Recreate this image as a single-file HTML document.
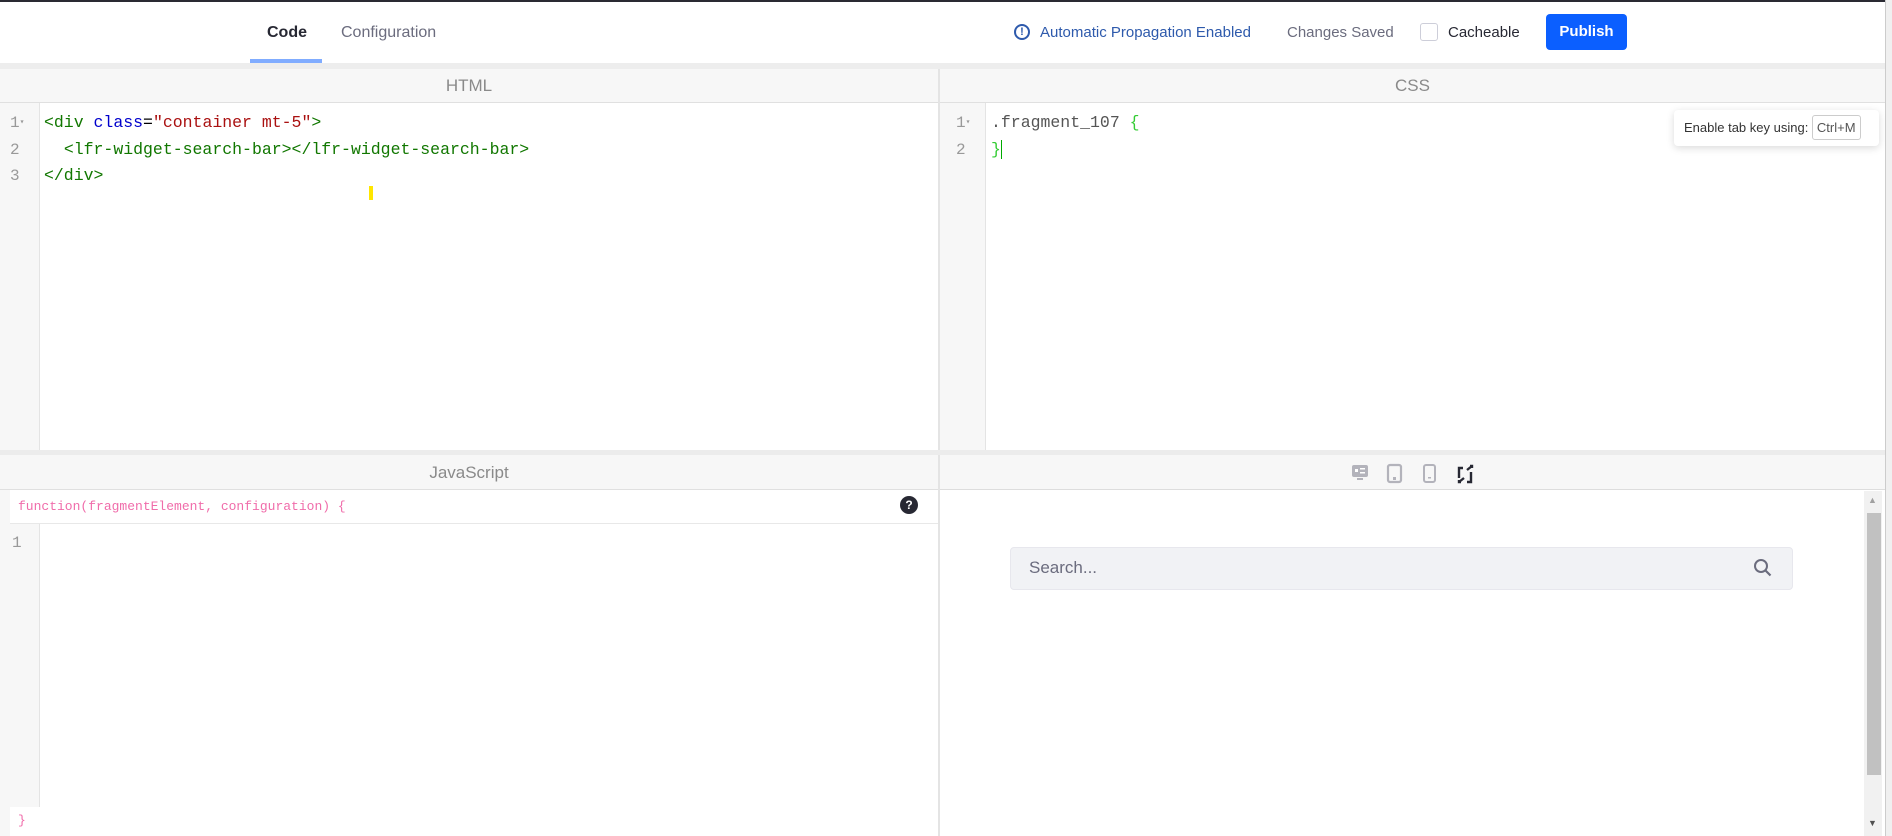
<!DOCTYPE html>
<html><head><meta charset="utf-8"><style>
*{box-sizing:border-box;margin:0;padding:0}
body{width:1892px;height:836px;overflow:hidden;background:#fff;font-family:"Liberation Sans",sans-serif;position:relative}
.a{position:absolute}
.mono{font-family:"Liberation Mono",monospace;font-size:16.5px;white-space:pre}
.hdr{background:#f7f7f7;border-bottom:1px solid #e0e0e0;color:#8a8a8a;font-size:17px;text-align:center}
.gut{background:#f7f7f7;border-right:1px solid #e4e4e4}
.ln{color:#999;font-family:"Liberation Mono",monospace;font-size:16px;line-height:26.5px;white-space:pre}
.ln i{font-style:normal;font-size:8px;vertical-align:top;line-height:26.5px}
</style></head><body>
<div class="a" style="left:0;top:0;width:1892px;height:2px;background:#2a2a33"></div>
<div class="a" style="left:267px;top:24px;font-size:16px;color:#272833;font-weight:bold">Code</div>
<div class="a" style="left:250px;top:59px;width:72px;height:4px;background:#80acff"></div>
<div class="a" style="left:341px;top:24px;font-size:16px;color:#6b6c7e">Configuration</div>
<div class="a" style="left:1014px;top:24px;width:16px;height:16px;border:2px solid #2e5aac;border-radius:50%;color:#2e5aac;font-size:11px;font-weight:bold;text-align:center;line-height:12px">!</div>
<div class="a" style="left:1040px;top:24px;font-size:15px;color:#2e5aac">Automatic Propagation Enabled</div>
<div class="a" style="left:1287px;top:24px;font-size:15px;color:#6b6c7e">Changes Saved</div>
<div class="a" style="left:1420px;top:23px;width:18px;height:18px;border:1px solid #cdced9;border-radius:3px"></div>
<div class="a" style="left:1448px;top:24px;font-size:15px;color:#272833">Cacheable</div>
<div class="a" style="left:1546px;top:14px;width:81px;height:36px;background:#0b5fff;border-radius:4px;color:#fff;font-weight:bold;font-size:15px;text-align:center;line-height:36px">Publish</div>
<div class="a" style="left:0;top:63px;width:1892px;height:6px;background:#ededed"></div>
<div class="a" style="left:1885px;top:0;width:7px;height:836px;background:#f0f0f0;border-left:1px solid #ccc"></div>
<!-- HTML panel -->
<div class="a hdr" style="left:0;top:69px;width:938px;height:34px;line-height:34px">HTML</div>
<div class="a gut" style="left:0;top:103px;width:40px;height:347px"></div>
<div class="a ln" style="left:10px;top:110px">1<i>▾</i>
2
3</div>
<div class="a mono" style="left:44px;top:110px;line-height:26.5px"><span style="color:#170">&lt;div</span> <span style="color:#00c">class</span>=<span style="color:#a11">"container mt-5"</span><span style="color:#170">&gt;</span>
  <span style="color:#170">&lt;lfr-widget-search-bar&gt;&lt;/lfr-widget-search-bar&gt;</span>
<span style="color:#170">&lt;/div&gt;</span></div>
<div class="a" style="left:369px;top:186px;width:4px;height:14px;background:#ffe600"></div>
<div class="a" style="left:938px;top:69px;width:2px;height:767px;background:#e4e4e4"></div>
<!-- CSS panel -->
<div class="a hdr" style="left:940px;top:69px;width:945px;height:34px;line-height:34px">CSS</div>
<div class="a gut" style="left:940px;top:103px;width:46px;height:347px"></div>
<div class="a ln" style="left:956px;top:110px">1<i>▾</i>
2</div>
<div class="a mono" style="left:991px;top:110px;line-height:26.5px"><span style="color:#555">.fragment_107</span> <span style="color:#3c3">{</span>
<span style="color:#3c3">}</span><span style="border-left:1px solid #0a0"></span></div>
<div class="a" style="left:1674px;top:110px;width:205px;height:36px;background:#fff;border-radius:4px;box-shadow:0 2px 8px rgba(0,0,0,.15);font-size:13px;color:#333;padding-left:10px;line-height:36px">Enable tab key using: <span style="border:1px solid #ccc;border-radius:3px;padding:4px 4px;color:#555">Ctrl+M</span></div>
<div class="a" style="left:0;top:450px;width:1885px;height:5px;background:#ececec"></div>
<!-- JS panel -->
<div class="a hdr" style="left:0;top:455px;width:938px;height:35px;line-height:35px">JavaScript</div>
<div class="a" style="left:0;top:490px;width:10px;height:346px;background:#f7f7f7"></div>
<div class="a mono" style="left:18px;top:499px;font-size:13px;color:#f06caa">function(fragmentElement, configuration) {</div>
<div class="a" style="left:900px;top:496px;width:18px;height:18px;border-radius:50%;background:#272833;color:#fff;font-size:12px;font-weight:bold;text-align:center;line-height:18px">?</div>
<div class="a" style="left:10px;top:523px;width:928px;height:1px;background:#e8e8e8"></div>
<div class="a gut" style="left:0;top:524px;width:40px;height:283px"></div>
<div class="a ln" style="left:12px;top:530px">1</div>
<div class="a mono" style="left:18px;top:813px;font-size:13px;color:#f06caa">}</div>
<!-- preview -->
<div class="a" style="left:940px;top:455px;width:945px;height:35px;background:#f7f7f7;border-bottom:1px solid #ddd"></div>
<svg class="a" style="left:1340px;top:458px" width="150" height="32" viewBox="0 0 150 32">
<rect x="12" y="7" width="16" height="12" rx="2" fill="#b3b3bb"/><rect x="15" y="11" width="3" height="3" fill="#fff"/><rect x="20" y="10" width="5" height="1.5" fill="#fff"/><rect x="20" y="14" width="5" height="1.5" fill="#fff"/><rect x="17" y="20" width="6" height="2" fill="#b3b3bb"/>
<rect x="48" y="7" width="13" height="17" rx="2" fill="none" stroke="#b3b3bb" stroke-width="2.2"/><rect x="53" y="19" width="3" height="3" fill="#b3b3bb"/>
<rect x="84" y="7" width="11" height="17" rx="2" fill="none" stroke="#b3b3bb" stroke-width="2"/><rect x="88" y="19" width="3" height="1.5" fill="#b3b3bb"/>
<path d="M119 20V10h4M127 24h4V14M127 12l5-4M130 8h2v2M124 20l-5 4M119 22v2h2" fill="none" stroke="#272833" stroke-width="2.4"/>
</svg>
<div class="a" style="left:1010px;top:547px;width:783px;height:43px;background:#f1f2f5;border:1px solid #e7e7ed;border-radius:4px"></div>
<div class="a" style="left:1029px;top:558px;font-size:17px;color:#6b6c7e">Search...</div>
<svg class="a" style="left:1753px;top:558px" width="20" height="20" viewBox="0 0 20 20"><circle cx="8" cy="8" r="6" fill="none" stroke="#6b6c7e" stroke-width="2"/><path d="M12.5 12.5l5 5" stroke="#6b6c7e" stroke-width="2.2"/></svg>
<div class="a" style="left:1864px;top:491px;width:18px;height:345px;background:#f1f1f1"></div>
<div class="a" style="left:1867px;top:513px;width:14px;height:262px;background:#c1c1c1"></div>
<div class="a" style="left:1868px;top:495px;font-size:9px;color:#a0a0a0">▲</div>
<div class="a" style="left:1868px;top:818px;font-size:9px;color:#505050">▼</div>
</body></html>
